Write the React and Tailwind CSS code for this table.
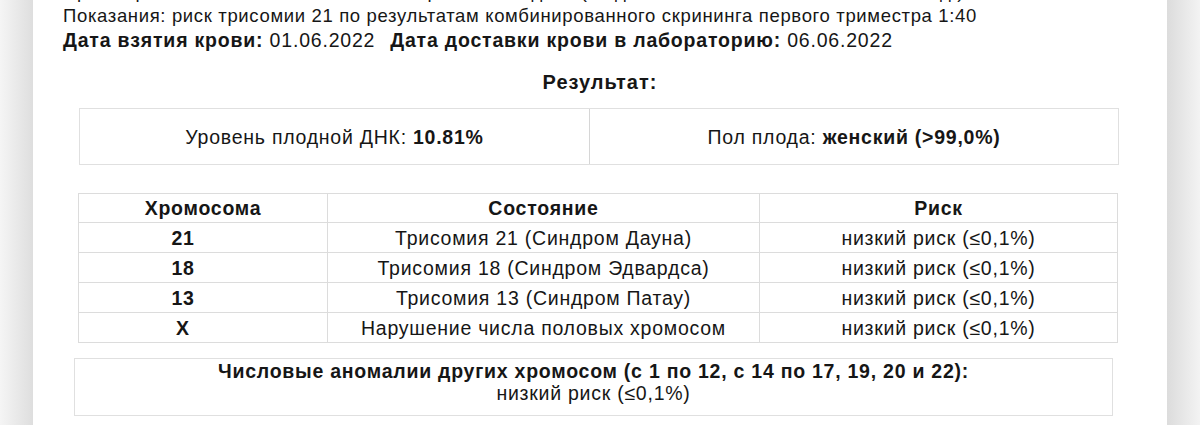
import React from "react";

const rows = [
  { chr: "21", name: "Трисомия 21 (Синдром Дауна)", risk: "низкий риск (≤0,1%)" },
  { chr: "18", name: "Трисомия 18 (Синдром Эдвардса)", risk: "низкий риск (≤0,1%)" },
  { chr: "13", name: "Трисомия 13 (Синдром Патау)", risk: "низкий риск (≤0,1%)" },
  { chr: "X", name: "Нарушение числа половых хромосом", risk: "низкий риск (≤0,1%)" },
];

const App = () => {
  return (
    <div
      className="flex h-[425px] w-[1200px] overflow-hidden bg-[#efefef] text-[19.5px] tracking-[0.75px] text-[#161616]"
      style={{ fontFamily: '"Liberation Sans", Arial, sans-serif' }}
    >
      {/* left shadow */}
      <div className="w-[33px] shrink-0 bg-linear-to-r from-[#f5f5f5] to-[#dedede]" />

      {/* page */}
      <div className="flex-1 bg-white">
        <div className="px-[30px] leading-[24px]">
          <p className="-mt-[20px] whitespace-nowrap text-[18.5px] tracking-[0.65px]">
            Срок беременности на момент взятия крови: 13 недель (по данным УЗИ от 20.05.2022 — 12 нед.)
          </p>
          <p className="whitespace-nowrap text-[18.5px] tracking-[0.65px]">
            Показания: риск трисомии 21 по результатам комбинированного скрининга первого триместра 1:40
          </p>
          <p className="whitespace-nowrap tracking-[0.8px]">
            <span className="font-bold">Дата взятия крови:</span> 01.06.2022
            <span className="ml-[15px] font-bold">Дата доставки крови в лабораторию:</span> 06.06.2022
          </p>
        </div>

        <h2 className="mt-[18px] text-center text-[20px] font-bold leading-[24px] tracking-[1px]">
          Результат:
        </h2>

        {/* summary box */}
        <div className="ml-[46px] mt-[14px] flex h-[57px] w-[1040px] border border-[#e0e0e0]">
          <div className="flex flex-1 items-center justify-center border-r border-[#d6d6d6] pt-[2px]">
            Уровень плодной ДНК:&nbsp;<span className="font-bold">10.81%</span>
          </div>
          <div className="flex w-[528px] items-center justify-center pt-[2px]">
            Пол плода:&nbsp;<span className="font-bold">женский (&gt;99,0%)</span>
          </div>
        </div>

        {/* chromosome table */}
        <table className="ml-[45px] mt-[28px] w-[1040px] border-collapse leading-[22px]">
          <thead>
            <tr className="h-[29px]">
              <th className="w-[249px] border border-[#dcdcdc] font-bold">Хромосома</th>
              <th className="w-[432px] border border-[#dcdcdc] font-bold">Состояние</th>
              <th className="border border-[#dcdcdc] font-bold">Риск</th>
            </tr>
          </thead>
          <tbody>
            {rows.map((r) => (
              <tr key={r.chr} className="h-[30px]">
                <td className="border border-[#dcdcdc] pr-[40px] text-center font-bold">{r.chr}</td>
                <td className="border border-[#dcdcdc] text-center">{r.name}</td>
                <td className="border border-[#dcdcdc] text-center">{r.risk}</td>
              </tr>
            ))}
          </tbody>
        </table>

        {/* other chromosomes */}
        <div className="ml-[41px] mt-[15px] h-[58px] w-[1039px] border border-[#e0e0e0] pt-[1px] text-center leading-[22px]">
          <p className="font-bold">
            Числовые аномалии других хромосом (с 1 по 12, с 14 по 17, 19, 20 и 22):
          </p>
          <p>низкий риск (≤0,1%)</p>
        </div>
      </div>

      {/* right shadow */}
      <div className="w-[33px] shrink-0 bg-linear-to-r from-[#dcdcdc] to-[#f3f3f3]" />
    </div>
  );
};

export default App;
